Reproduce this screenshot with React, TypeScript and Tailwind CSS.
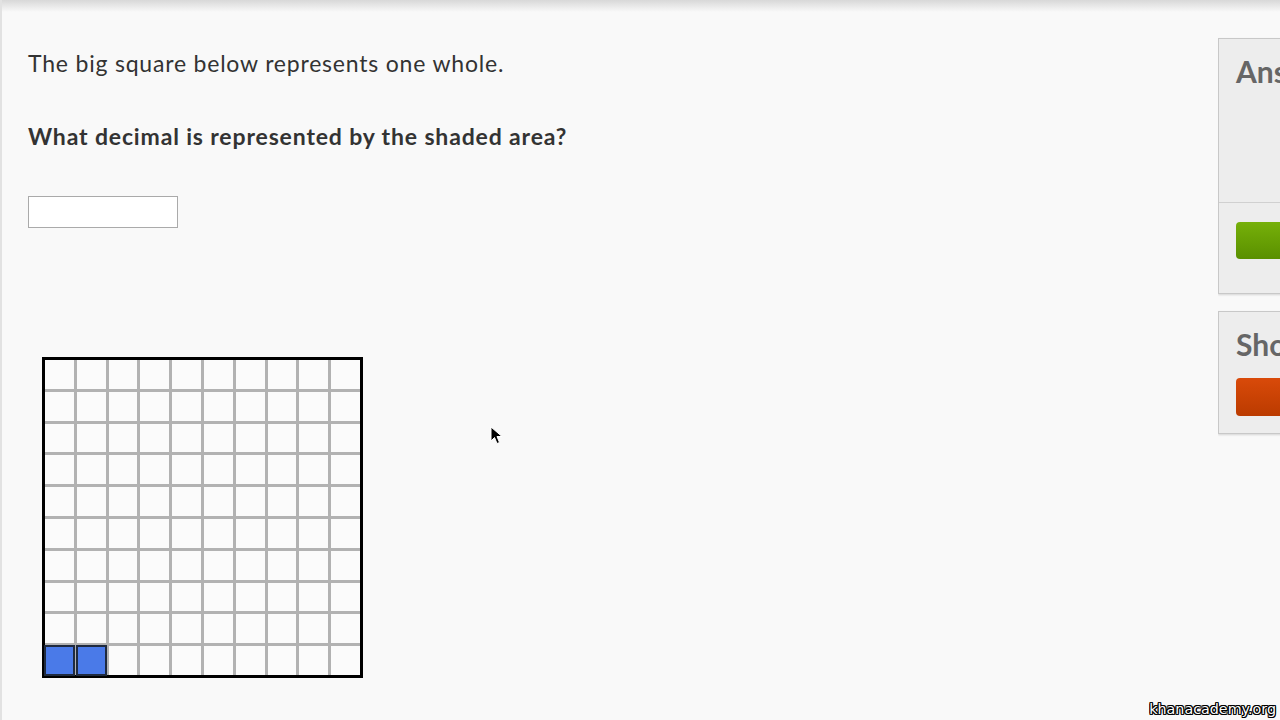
import React from "react";

function Grid() {
  const cells = [];
  for (let r = 0; r < 10; r++) {
    for (let c = 0; c < 10; c++) {
      const shaded = r === 9 && c < 2;
      cells.push(
        <div
          key={`${r}-${c}`}
          className={shaded ? "bg-[#4a7ae8] outline-2 outline-[#1f2a3e] -outline-offset-1 z-10" : "bg-[#fbfbfb]"}
        />
      );
    }
  }
  return (
    <div className="w-[321px] h-[321px] border-[3px] border-black bg-[#b2b2b2]">
      <div className="grid grid-cols-10 grid-rows-10 gap-[3px] w-full h-full">{cells}</div>
    </div>
  );
}

export default function App() {
  return (
    <div
      className="relative w-[1280px] h-[720px] overflow-hidden bg-[#f9f9f9] text-[#333]"
      style={{ fontFamily: "Lato, 'Open Sans', sans-serif" }}
    >
      <div className="absolute inset-x-0 top-0 h-[12px] bg-gradient-to-b from-[#d8d8d8] to-transparent" />
      <div className="absolute inset-y-0 left-0 w-[2px] bg-[#e2e2e2]" />
      <div className="flex h-full">
        <div className="flex-1 pl-[28px] pt-[48px]">
          <p className="text-[23px] leading-[30px] tracking-[0.8px]">The big square below represents one whole.</p>
          <p className="mt-[43px] text-[23px] leading-[30px] font-bold tracking-[0.85px]">What decimal is represented by the shaded area?</p>
          <div className="mt-[45px] w-[150px] h-[32px] bg-white border border-[#aaaaaa]" />
          <div className="mt-[129px] ml-[14px]">
            <Grid />
          </div>
        </div>
        <div className="w-[62px] overflow-hidden pt-[38px]">
          <div className="w-[200px] border border-[#c8c8c8] bg-[#ededed] shadow-[0_1px_2px_rgba(0,0,0,0.15)]">
            <div className="h-[163px] pl-[17px] pt-[14px] text-[30px] leading-[36px] font-bold text-[#666]">Answer</div>
            <div className="border-t border-[#d0d0d0] h-[91px] pl-[17px] pt-[19px]">
              <div className="h-[37px] rounded-[4px] bg-gradient-to-b from-[#76b00a] to-[#5a9000]" />
            </div>
          </div>
          <div className="mt-[17px] w-[200px] border border-[#c8c8c8] bg-[#ededed] shadow-[0_1px_2px_rgba(0,0,0,0.15)] h-[123px] pl-[17px] pt-[14px]">
            <div className="text-[30px] leading-[36px] font-bold text-[#666]">Show</div>
            <div className="mt-[16px] h-[38px] rounded-[4px] bg-gradient-to-b from-[#d94a0a] to-[#bb3b00]" />
          </div>
        </div>
      </div>
      <svg className="absolute left-[490px] top-[426px]" width="14" height="20" viewBox="0 0 14 20">
        <path d="M1 1 L1 15 L4.5 11.5 L7 17.5 L9.5 16.5 L7 10.5 L12 10.5 Z" fill="#000" stroke="#fff" strokeWidth="1" />
      </svg>
      <div
        className="absolute right-[4px] bottom-[2px] text-[14.3px] leading-[18px] text-white"
        style={{ fontFamily: "'DejaVu Sans', sans-serif", textShadow: "1px 0 #000, -1px 0 #000, 0 1px #000, 0 -1px #000, 1px 1px #000, -1px -1px #000, 1px -1px #000, -1px 1px #000" }}
      >
        khanacademy.org
      </div>
    </div>
  );
}
